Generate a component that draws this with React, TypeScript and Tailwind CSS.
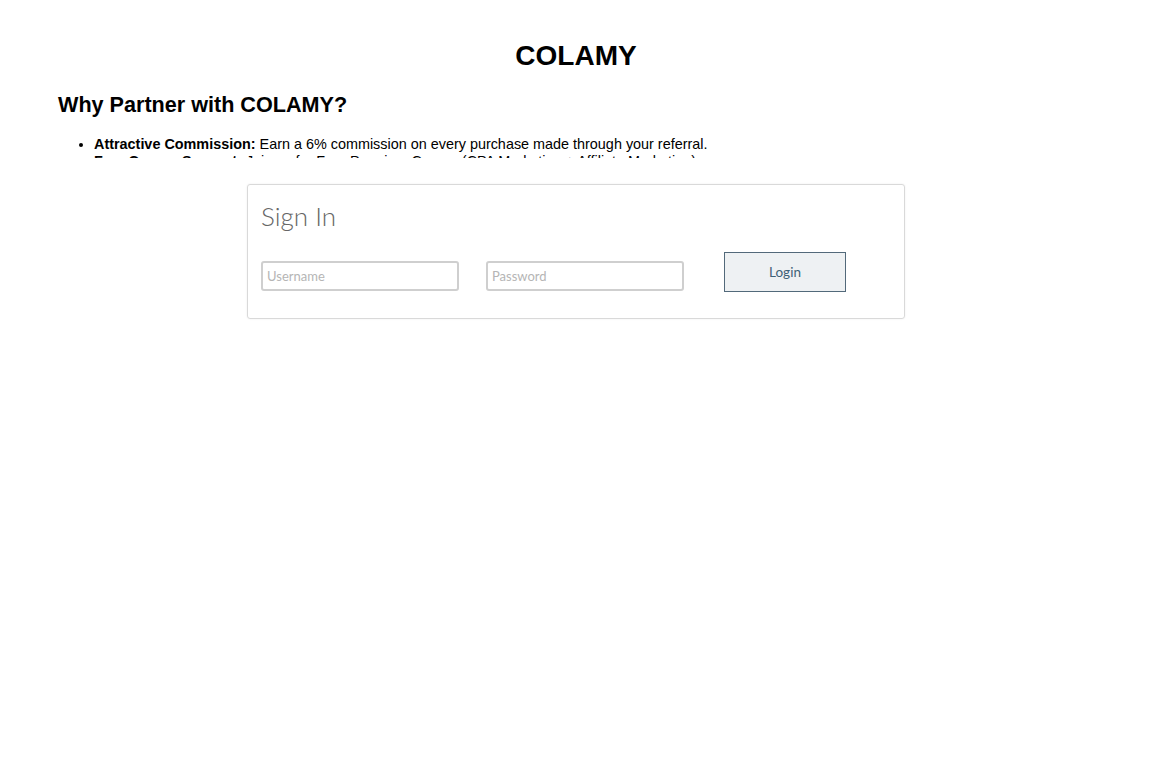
import React from 'react';

const arial = { fontFamily: '"Liberation Sans", Arial, sans-serif' };

export default function App() {
  return (
    <div className="min-h-screen w-full bg-white text-black">
      {/* Partner info, clipped by its box like in the page */}
      <div className="h-[158px] overflow-hidden" style={arial}>
        <h1 className="pt-[40px] text-center text-[28px] font-bold leading-[32px]">COLAMY</h1>
        <h2 className="ml-[58px] mt-[20px] text-[21.6px] font-bold leading-[25px]">
          Why Partner with COLAMY?
        </h2>
        <ul className="mt-[19px] list-disc pl-[94px] text-[14.4px] leading-[16.5px]">
          <li>
            <strong>Attractive Commission:</strong> Earn a 6% commission on every purchase made through your referral.
          </li>
          <li>
            <strong>Free Course Support:</strong> Join us for Free Premium Course (CPA Marketing + Affiliate Marketing)
          </li>
          <li>
            <strong>Easy Withdrawals:</strong> Withdraw your earnings any time.
          </li>
        </ul>
      </div>

      {/* Sign in card */}
      <div
        className="ml-[247px] mt-[26px] h-[135px] w-[658px] rounded-[3px] border border-[#d9d9d9] px-[13px] pt-[17px] shadow-[0_0_2px_rgba(0,0,0,0.08)]"
        style={{ fontFamily: 'Lato, "Open Sans", sans-serif' }}
      >
        <div className="text-[26px] font-light leading-[28px] text-[#666666]">Sign In</div>
        <div className="mt-[22px] flex items-start">
          <input
            placeholder="Username"
            className="mt-[9px] h-[30px] w-[198px] rounded-[3px] border-2 border-[#cfcfcf] px-[4px] text-[13px] text-[#555] outline-none placeholder:text-[#b5b5b5]"
          />
          <input
            type="password"
            placeholder="Password"
            className="ml-[27px] mt-[9px] h-[30px] w-[198px] rounded-[3px] border-2 border-[#cfcfcf] px-[4px] text-[13px] text-[#555] outline-none placeholder:text-[#b5b5b5]"
          />
          <button className="ml-[40px] h-[40px] w-[122px] border border-[#52697a] bg-[#eef1f3] text-[13.5px] text-[#3f6176]">
            Login
          </button>
        </div>
      </div>
    </div>
  );
}
